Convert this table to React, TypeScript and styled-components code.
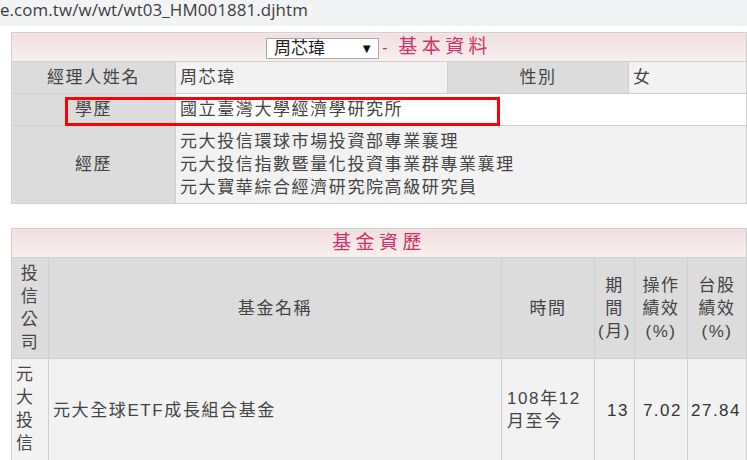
import React from "react";
import styled, { createGlobalStyle } from "styled-components";

const Global = createGlobalStyle`
  html, body { margin: 0; padding: 0; background: #ffffff; }
  body { font-family: "Liberation Sans", "Noto Sans CJK TC", sans-serif; }
`;

const Page = styled.div`
  width: 747px;
  height: 460px;
  overflow: hidden;
  background: #ffffff;
`;

const UrlBar = styled.div`
  height: 26px;
  background: #f1f3f4;
  font-family: "Open Sans", "Noto Sans", sans-serif;
  font-size: 16.9px;
  line-height: 19px;
  color: #3d3d3d;
  white-space: nowrap;
  letter-spacing: 0.1px;
`;

const Content = styled.div`
  padding: 6px 1px 0 11px;
  display: flex;
  flex-direction: column;
  gap: 24px;
`;

const Wrap = styled.div`
  position: relative;
  width: 735px;
`;

const Table = styled.table`
  width: 735px;
  border-collapse: collapse;
  table-layout: fixed;
  font-family: "Liberation Sans", "Noto Sans CJK TC", sans-serif;
  font-size: 17px;
  letter-spacing: 1.6px;
  line-height: 23px;
  color: #444;
  border: 1px solid #cfcfcf;
`;

const TitleCell = styled.td`
  height: 28px;
  padding: 0;
  text-align: center;
  background: linear-gradient(#f1dfdf, #f8efef);
  border: 1px solid #cfcfcf;
  vertical-align: middle;
`;

const Title = styled.span`
  color: #d3306a;
  font-size: 19px;
  letter-spacing: 4.4px;
`;

const Dash = styled.span`
  color: #d3306a;
  font-size: 17px;
  margin: 0 9px 0 3px;
`;

const Select = styled.span`
  display: inline-flex;
  align-items: center;
  justify-content: space-between;
  box-sizing: border-box;
  width: 113px;
  height: 21px;
  padding: 0 5px 0 7px;
  background: #ffffff;
  border: 1px solid #a9a9a9;
  color: #222;
  font-size: 17px;
  letter-spacing: 0;
  vertical-align: middle;
`;

const Arrow = styled.span`
  font-size: 13px;
  color: #111;
`;

const Cell = styled.td<{ $bg?: string; $align?: string; $valign?: string; $pad?: string }>`
  background: ${(p) => p.$bg || "#f2f2f2"};
  text-align: ${(p) => p.$align || "left"};
  vertical-align: ${(p) => p.$valign || "middle"};
  padding: ${(p) => p.$pad || "4px 4px"};
  border: 1px solid #cfcfcf;
  word-break: break-all;
`;

const Highlight = styled.div`
  position: absolute;
  left: 54px;
  top: 65px;
  width: 435px;
  height: 29px;
  box-sizing: border-box;
  border: 3px solid #ff0000;
  pointer-events: none;
`;

const Line = styled.div``;

const Num = styled.span`
  letter-spacing: 1.5px;
  color: #333;
`;

export default function App() {
  return (
    <Page>
      <Global />
      <UrlBar>e.com.tw/w/wt/wt03_HM001881.djhtm</UrlBar>
      <Content>
        <Wrap>
          <Table>
            <colgroup>
              <col style={{ width: 164 }} />
              <col style={{ width: 272 }} />
              <col style={{ width: 181 }} />
              <col style={{ width: 118 }} />
            </colgroup>
            <tbody>
              <tr>
                <TitleCell colSpan={4}>
                  <Select>
                    周芯瑋<Arrow>▼</Arrow>
                  </Select>
                  <Dash>-</Dash>
                  <Title>基本資料</Title>
                </TitleCell>
              </tr>
              <tr>
                <Cell $bg="#dcdcdc" $align="center">經理人姓名</Cell>
                <Cell>周芯瑋</Cell>
                <Cell $bg="#dcdcdc" $align="center">性別</Cell>
                <Cell>女</Cell>
              </tr>
              <tr>
                <Cell $bg="#dcdcdc" $align="center">學歷</Cell>
                <Cell $bg="#ffffff" colSpan={3}>國立臺灣大學經濟學研究所</Cell>
              </tr>
              <tr>
                <Cell $bg="#dcdcdc" $align="center">經歷</Cell>
                <Cell colSpan={3} $pad="4px 4px 4px 4px">
                  <Line>元大投信環球市場投資部專業襄理</Line>
                  <Line>元大投信指數暨量化投資事業群專業襄理</Line>
                  <Line>元大寶華綜合經濟研究院高級研究員</Line>
                </Cell>
              </tr>
            </tbody>
          </Table>
          <Highlight />
        </Wrap>
        <Table>
          <colgroup>
            <col style={{ width: 37 }} />
            <col style={{ width: 453 }} />
            <col style={{ width: 93 }} />
            <col style={{ width: 40 }} />
            <col style={{ width: 53 }} />
            <col style={{ width: 59 }} />
          </colgroup>
          <tbody>
            <tr>
              <TitleCell colSpan={6}>
                <Title>基金資歷</Title>
              </TitleCell>
            </tr>
            <tr>
              <Cell $bg="#dcdcdc" $align="center" $pad="4px 2px">投信公司</Cell>
              <Cell $bg="#dcdcdc" $align="center">基金名稱</Cell>
              <Cell $bg="#dcdcdc" $align="center">時間</Cell>
              <Cell $bg="#dcdcdc" $align="center" $pad="4px 3px">期間(月)</Cell>
              <Cell $bg="#dcdcdc" $align="center" $pad="4px 2px">操作績效(%)</Cell>
              <Cell $bg="#dcdcdc" $align="center" $pad="4px 2px">台股績效(%)</Cell>
            </tr>
            <tr>
              <Cell $pad="4px 2px 6px 4px">元大投信</Cell>
              <Cell>元大全球ETF成長組合基金</Cell>
              <Cell $pad="4px 4px 4px 5px">108年12月至今</Cell>
              <Cell $align="right" $pad="4px 5px 4px 0">
                <Num>13</Num>
              </Cell>
              <Cell $align="right" $pad="4px 5px 4px 0">
                <Num>7.02</Num>
              </Cell>
              <Cell $align="right" $pad="4px 5px 4px 0">
                <Num>27.84</Num>
              </Cell>
            </tr>
          </tbody>
        </Table>
      </Content>
    </Page>
  );
}
